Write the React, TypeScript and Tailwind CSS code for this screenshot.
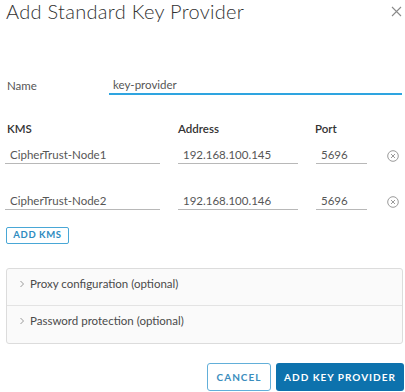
import type { ReactNode } from 'react'

// 圆形删除按钮
function RemoveIcon() {
  return (
    <svg width="12" height="12" viewBox="0 0 12 12" fill="none" stroke="#9a9a9a" strokeWidth={1}>
      <circle cx="6" cy="6" r="5.3" />
      <path d="M4 4l4 4M8 4l-4 4" />
    </svg>
  )
}

function Chevron() {
  return (
    <svg width="6" height="8" viewBox="0 0 6 8" fill="none" stroke="#9a9a9a" strokeWidth={1}>
      <path d="M1.5 1l3 3-3 3" />
    </svg>
  )
}

function Field({ width, children }: { width: string; children: ReactNode }) {
  return (
    <div className={`${width} h-[18px] flex items-center border-b border-[#b8b8b8] pl-[5px] text-[11.5px] text-[#565656]`}>
      {children}
    </div>
  )
}

const rows = [
  { kms: 'CipherTrust-Node1', address: '192.168.100.145', port: '5696' },
  { kms: 'CipherTrust-Node2', address: '192.168.100.146', port: '5696' },
]

export default function App() {
  return (
    <div className="w-[405px] h-[392px] bg-white overflow-hidden font-['Lato',sans-serif] text-[#565656]">
      {/* 标题 */}
      <div className="flex items-center justify-between h-[22px] pl-[6px] pr-[3px]">
        <h1 className="text-[20px] font-light text-[#313131] leading-none tracking-[0.3px]">Add Standard Key Provider</h1>
        <svg width="11" height="11" viewBox="0 0 11 11" stroke="#8a8a8a" strokeWidth={1.1}>
          <path d="M1 1l9 9M10 1l-9 9" />
        </svg>
      </div>

      {/* Name */}
      <div className="mt-[56px] flex items-end">
        <span className="w-[109px] pl-[7px] text-[11.5px] leading-[16px] pb-[1px]">Name</span>
        <div className="w-[293px] h-[17px] border-b-2 border-[#2ea4e0] pl-[4px] text-[11.5px] leading-[13px]">
          key-provider
        </div>
      </div>

      {/* 表头 */}
      <div className="mt-[27px] flex text-[11.5px] font-semibold text-[#333] leading-[14px]">
        <span className="w-[178px] pl-[7px]">KMS</span>
        <span className="w-[137px]">Address</span>
        <span>Port</span>
      </div>

      {/* KMS 行 */}
      {rows.map((r, i) => (
        <div key={i} className={`${i === 0 ? 'mt-[10px]' : 'mt-[28px]'} flex items-center pl-[5px]`}>
          <Field width="w-[155px]">{r.kms}</Field>
          <div className="w-[18px]" />
          <Field width="w-[120px]">{r.address}</Field>
          <div className="w-[18px]" />
          <Field width="w-[51px]">{r.port}</Field>
          <div className="ml-[20px] mt-[2px] flex"><RemoveIcon /></div>
        </div>
      ))}

      <button className="mt-[17px] ml-[6px] w-[63px] h-[17px] border border-[#49a7d6] rounded-[2px] text-[9.5px] font-bold tracking-[0.6px] text-[#2e8bc0] flex items-center justify-center">
        ADD KMS
      </button>

      {/* 可折叠区域 */}
      <div className="mt-[24px] mx-[6px] w-[397px] border border-[#dcdcdc] rounded-[3px] bg-[#fafafa]">
        {['Proxy configuration (optional)', 'Password protection (optional)'].map((label, i) => (
          <div key={label} className={`h-[37px] pt-[8px] flex items-start ${i === 0 ? 'border-b border-[#e3e3e3]' : ''}`}>
            <div className="w-[23px] pl-[12px] pt-[3px] flex"><Chevron /></div>
            <span className="text-[11.5px] leading-[14px] text-[#4a4a4a]">{label}</span>
          </div>
        ))}
      </div>

      {/* 底部按钮 */}
      <div className="mt-[19px] flex justify-end gap-[5px] pr-[1px]">
        <button className="w-[64px] h-[28px] border border-[#62afd9] rounded-[3px] text-[10px] font-bold tracking-[1px] text-[#3a8dbd]">
          CANCEL
        </button>
        <button className="w-[128px] h-[28px] bg-[#0d72ad] rounded-[3px] text-[10px] font-bold tracking-[1px] text-white">
          ADD KEY PROVIDER
        </button>
      </div>
    </div>
  )
}
